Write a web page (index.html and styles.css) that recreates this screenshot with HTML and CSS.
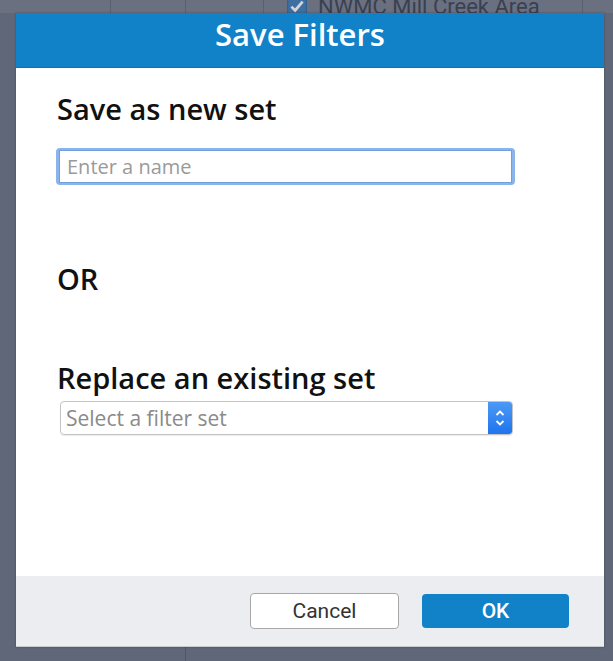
FILE: index.html
```html
<!DOCTYPE html>
<html>
<head>
<meta charset="utf-8">
<link rel="stylesheet" href="styles.css">
</head>
<body>
<div class="page">
  <div class="bg-row">
    <div class="cell c1"></div>
    <div class="cell c2"></div>
    <div class="cell c3"></div>
    <div class="cell c4">
      <span class="chk"><svg width="20" height="20" viewBox="0 0 16 16"><rect x="0.5" y="0.5" width="15" height="15" rx="2" fill="#2a6fb0" stroke="#1d5a95"/><path d="M3.5 8.5 L6.5 11.5 L12.5 4.5" fill="none" stroke="#fff" stroke-width="2.2"/></svg></span>
      <span class="bg-text">NWMC Mill Creek Area</span>
    </div>
    <div class="cell c5"></div>
  </div>
  <div class="bg-rest">
    <div class="rcell r1"></div>
    <div class="rcell r2"></div>
  </div>

  <div class="dialog">
    <div class="header">Save Filters</div>
    <div class="content">
      <h2 class="label first">Save as new set</h2>
      <div class="input-wrap"><input class="text-input" type="text" placeholder="Enter a name"></div>
      <div class="or">OR</div>
      <h2 class="label second">Replace an existing set</h2>
      <div class="select">
        <span class="select-text">Select a filter set</span>
        <span class="stepper"><svg width="12" height="22" viewBox="0 0 12 22"><path d="M2.5 8 L6 4.5 L9.5 8" fill="none" stroke="#fff" stroke-width="1.8"/><path d="M2.5 14 L6 17.5 L9.5 14" fill="none" stroke="#fff" stroke-width="1.8"/></svg></span>
      </div>
    </div>
    <div class="footer">
      <button class="btn cancel">Cancel</button>
      <button class="btn ok">OK</button>
    </div>
  </div>
</div>
</body>
</html>
```
FILE: styles.css
```css
html, body {
  margin: 0;
  padding: 0;
}
body {
  width: 613px;
  height: 661px;
  overflow: hidden;
  background: #5f6779;
  font-family: "Open Sans", "Noto Sans", sans-serif;
}
.page {
  position: relative;
  width: 613px;
  height: 661px;
  display: flex;
  flex-direction: column;
}
.bg-row {
  display: flex;
  height: 13px;
  overflow: hidden;
  background: #6a7080;
}
.cell {
  border-right: 1px solid #5a6070;
  height: 100%;
}
.c1 { width: 110px; }
.c2 { width: 74px; }
.c3 { width: 77px; }
.c4 {
  width: 319px;
  display: flex;
  align-items: flex-start;
  box-sizing: border-box;
  padding-left: 23px;
  overflow: hidden;
}
.c5 { flex: 1; border-right: none; }
.chk {
  display: block;
  margin-top: -4px;
  margin-right: 11px;
  opacity: 0.7;
}
.bg-text {
  font-family: "Roboto", sans-serif;
  font-size: 22px;
  color: #3a4050;
  line-height: 13px;
  white-space: nowrap;
}
.bg-rest {
  flex: 1;
  display: flex;
}
.rcell {
  border-right: 1px solid #505666;
}
.r1 { width: 185px; }
.r2 { flex: 1; border-right: none; }

.dialog {
  position: absolute;
  left: 16px;
  top: 13px;
  width: 588px;
  height: 634px;
  display: flex;
  flex-direction: column;
  background: #ffffff;
  box-shadow: 0 0 2px rgba(0,0,0,0.3);
}
.header {
  height: 55px;
  background: #1282c8;
  color: #ffffff;
  font-size: 31px;
  font-weight: 600;
  line-height: 42px;
  text-align: center;
  padding-right: 20px;
  box-sizing: border-box;
  border-bottom: 1px solid #0f74b4;
}
.content {
  flex: 1;
  padding: 0 0 0 41px;
  display: flex;
  flex-direction: column;
}
.label {
  margin: 0;
  font-weight: 600;
  font-size: 29px;
  color: #111111;
  line-height: 38px;
}
.label.first {
  margin-top: 22px;
}
.input-wrap {
  margin-top: 20px;
  margin-left: -1px;
  width: 459px;
  height: 37px;
  border-radius: 4px;
  background: #8ab4ea;
  padding: 2px 3px;
  box-sizing: border-box;
}
.text-input {
  display: block;
  width: 100%;
  height: 100%;
  box-sizing: border-box;
  border: 1px solid #6f9fde;
  outline: none;
  margin: 0;
  padding: 0 0 0 7px;
  font-family: "Open Sans", sans-serif;
  font-weight: 500;
  font-size: 20px;
  color: #333;
  background: #fff;
}
.text-input::placeholder {
  color: #9a9a9a;
}
.or {
  margin-top: 75px;
  font-size: 29px;
  font-weight: 600;
  line-height: 38px;
  color: #111;
}
.label.second {
  margin-top: 61px;
}
.select {
  margin-top: 4px;
  margin-left: 3px;
  width: 453px;
  height: 34px;
  box-sizing: border-box;
  border: 1px solid #c4c4c4;
  border-radius: 4px;
  display: flex;
  align-items: center;
  overflow: hidden;
  box-shadow: 0 1px 1px rgba(0,0,0,0.08);
}
.select-text {
  flex: 1;
  padding-left: 5px;
  font-size: 21px;
  font-weight: 500;
  color: #8a8a8a;
}
.stepper {
  width: 24px;
  height: 100%;
  background: linear-gradient(#4c9af5, #1f74ee);
  display: flex;
  align-items: center;
  justify-content: center;
}
.footer {
  height: 70px;
  background: #ecedf0;
  display: flex;
  align-items: center;
  justify-content: flex-end;
  gap: 23px;
  padding-right: 35px;
  border-bottom: 1px solid #c8cad0;
}
.btn {
  font-family: "Roboto", sans-serif;
  font-size: 21px;
  height: 36px;
  border-radius: 4px;
  margin: 0;
  padding: 0;
}
.cancel {
  width: 149px;
  background: #ffffff;
  border: 1px solid #a8a8a8;
  color: #333;
}
.ok {
  width: 147px;
  height: 34px;
  background: #1282c8;
  border: none;
  color: #fff;
  font-weight: 500;
}
```
